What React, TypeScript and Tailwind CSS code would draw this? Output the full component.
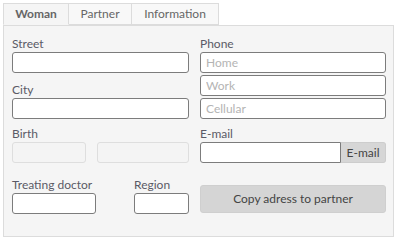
import React from 'react'

const label = 'h-4 leading-4 text-[12px] text-[#5a5a66]'
const input = 'h-[21px] w-full rounded-[3px] border border-[#7c7c7c] bg-white px-[5px] text-[12px] text-[#444] outline-none placeholder:text-[#b4b4b4]'
const disabledInput = 'h-[21px] rounded-[3px] border border-[#dedede] bg-[#f4f4f4]'

function Tab({ name, active, w }: { name: string; active?: boolean; w: string }) {
  return (
    <div
      className={
        'flex h-[22px] items-center justify-center border border-[#dcdcdc] text-[12px] text-[#666] ' +
        w +
        (active ? ' relative z-10 -mb-px border-b-[#f5f5f5] bg-[#f5f5f5] font-bold' : ' -ml-px bg-[#f8f8f8]')
      }
    >
      {name}
    </div>
  )
}

export default function App() {
  return (
    <div className="h-[240px] w-[401px] bg-white pl-[3px] pt-[3px]" style={{ fontFamily: 'Lato, "Open Sans", sans-serif' }}>
      {/* tabs */}
      <div className="flex">
        <Tab name="Woman" active w="w-[66px]" />
        <Tab name="Partner" w="w-[64px]" />
        <Tab name="Information" w="w-[88px]" />
      </div>

      {/* panel */}
      <div className="h-[212px] w-[391px] border border-[#dcdcdc] bg-[#f5f5f5] pl-[8px] pt-[10px]">
        <div className="grid grid-cols-[177px_186px] gap-x-[11px]">
          {/* left column */}
          <div className="flex flex-col">
            <div className={label}>Street</div>
            <input className={input} />
            <div className={label + ' mt-[9px]'}>City</div>
            <input className={input} />
            <div className={label + ' mt-[7px]'}>Birth</div>
            <div className="flex gap-[11px]">
              <div className={disabledInput + ' w-[74px]'} />
              <div className={disabledInput + ' w-[92px]'} />
            </div>
            <div className="mt-[14px] flex gap-[38px]">
              <div className="flex w-[84px] flex-col">
                <div className={label}>Treating doctor</div>
                <input className={input} />
              </div>
              <div className="flex w-[55px] flex-col">
                <div className={label}>Region</div>
                <input className={input} />
              </div>
            </div>
          </div>

          {/* right column */}
          <div className="flex flex-col">
            <div className={label}>Phone</div>
            <input className={input} placeholder="Home" />
            <input className={input + ' mt-[2px]'} placeholder="Work" />
            <input className={input + ' mt-[2px]'} placeholder="Cellular" />
            <div className={label + ' mt-[7px]'}>E-mail</div>
            <div className="flex">
              <input className={input + ' rounded-r-none'} />
              <button className="h-[21px] w-[45px] shrink-0 rounded-r-[3px] border border-l-0 border-[#cdcdcd] bg-[#d6d6d6] text-[12px] text-[#444]">
                E-mail
              </button>
            </div>
            <button className="mt-[22px] h-[28px] w-full rounded-[3px] border border-[#cfcfcf] bg-[#d5d5d5] text-[12px] text-[#444]">
              Copy adress to partner
            </button>
          </div>
        </div>
      </div>
    </div>
  )
}
